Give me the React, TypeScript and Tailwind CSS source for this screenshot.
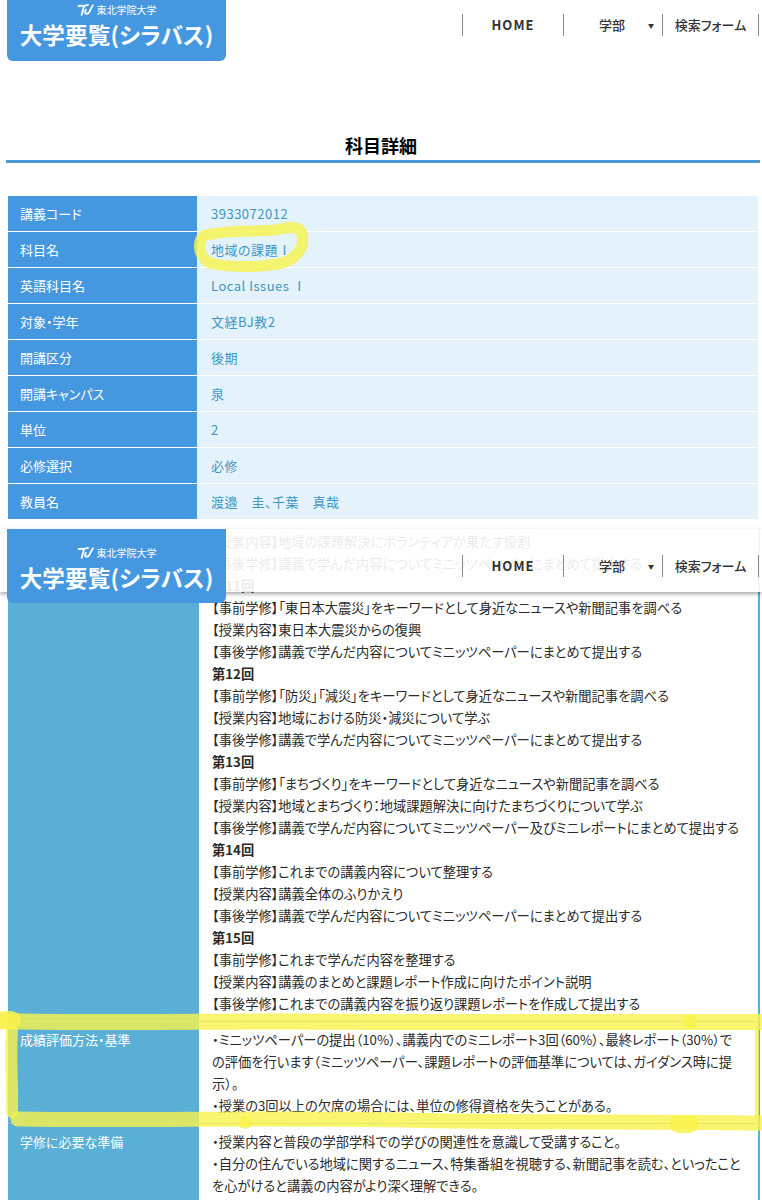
const infoRows = [
  ["講義コード", "3933072012"],
  ["科目名", "地域の課題Ⅰ"],
  ["英語科目名", "Local Issues Ⅰ"],
  ["対象・学年", "文経BJ教2"],
  ["開講区分", "後期"],
  ["開講キャンパス", "泉"],
  ["単位", "2"],
  ["必修選択", "必修"],
  ["教員名", "渡邉　圭、千葉　真哉"],
];

const scheduleLines = [
  "【授業内容】地域の課題解決にボランティアが果たす役割",
  "【事後学修】講義で学んだ内容についてミニッツペーパーにまとめて提出する",
  "第11回",
  "【事前学修】「東日本大震災」をキーワードとして身近なニュースや新聞記事を調べる",
  "【授業内容】東日本大震災からの復興",
  "【事後学修】講義で学んだ内容についてミニッツペーパーにまとめて提出する",
  "第12回",
  "【事前学修】「防災」「減災」をキーワードとして身近なニュースや新聞記事を調べる",
  "【授業内容】地域における防災・減災について学ぶ",
  "【事後学修】講義で学んだ内容についてミニッツペーパーにまとめて提出する",
  "第13回",
  "【事前学修】「まちづくり」をキーワードとして身近なニュースや新聞記事を調べる",
  "【授業内容】地域とまちづくり：地域課題解決に向けたまちづくりについて学ぶ",
  "【事後学修】講義で学んだ内容についてミニッツペーパー及びミニレポートにまとめて提出する",
  "第14回",
  "【事前学修】これまでの講義内容について整理する",
  "【授業内容】講義全体のふりかえり",
  "【事後学修】講義で学んだ内容についてミニッツペーパーにまとめて提出する",
  "第15回",
  "【事前学修】これまで学んだ内容を整理する",
  "【授業内容】講義のまとめと課題レポート作成に向けたポイント説明",
  "【事後学修】これまでの講義内容を振り返り課題レポートを作成して提出する",
];

const LogoMark = () => (
  <svg viewBox="0 0 20 16" className="h-[16px] w-[18px] text-white" fill="none" stroke="currentColor" strokeWidth="2">
    <path d="M1 4c4-2 7 1 12-2" />
    <path d="M8 3 5 14" />
    <path d="M10 7 9 10c-.6 2.500 3 3 4.500 .5L18 2" />
  </svg>
);

const Logo = ({ small }: { small?: boolean }) => (
  <div className={small ? "flex h-[61px] w-[219px] flex-col items-center justify-end rounded-b-md bg-[#4598e0] pb-[12px] text-white" : "flex h-[74px] w-[219px] flex-col items-center justify-end rounded-b-md bg-[#4598e0] pb-[11px] text-white"}>
    <div className="flex items-center gap-[2px] text-[10px] leading-[14px]">
      <LogoMark />
      <span>東北学院大学</span>
    </div>
    <div className="mt-[1px] text-[22.5px] leading-[30px] font-bold tracking-[0.2px] whitespace-nowrap">大学要覧(シラバス)</div>
  </div>
);

const Nav = ({ small }: { small?: boolean }) => (
  <div className={small ? "mt-[14px] flex h-[22px] text-[13px] font-medium text-[#333]" : "mt-[26px] flex h-[22px] text-[13px] font-medium text-[#333]"}>
    <div className="flex w-[101px] items-center justify-center border-l border-[#888] font-bold tracking-[1px]">HOME</div>
    <div className="relative flex w-[99px] items-center justify-center border-l border-[#888] pr-[2px]">
      学部
      <span className="absolute right-[8px] text-[6px]">▼</span>
    </div>
    <div className="flex w-[97px] items-center justify-center border-x border-[#888]">検索フォーム</div>
  </div>
);

const Header = ({ small }: { small?: boolean }) => (
  <div className="flex items-start justify-between pl-[7px] pr-[3px]">
    <Logo small={small} />
    <Nav small={small} />
  </div>
);

const bodyText = "flex-1 min-w-0 border-x-2 border-[#5aafd6] pl-[13px] pr-[14px] text-[13.25px] leading-[22px] text-[#2a2a2a]";

export default function App() {
  return (
    <div className="relative h-[1200px] w-[762px] overflow-hidden bg-white [font-family:'Noto_Sans_CJK_JP','Noto_Sans',sans-serif] [font-feature-settings:'palt']">
      <div className="h-[529px]">
        <Header small />
        <h1 className="mt-[70px] text-center text-[18px] leading-[28px] font-bold text-black">科目詳細</h1>
        <div className="mt-[1px] mr-[2px] ml-[6px] h-[3px] bg-[#4a98d8]" />
        <div className="mt-[33px] mr-[4px] ml-[8px] flex flex-col gap-px">
          {infoRows.map(([label, value]) => (
            <div key={label} className="flex h-[35px] text-[13px]">
              <div className="flex w-[189px] shrink-0 items-center bg-[#4598e0] pt-px pl-[12px] text-white">{label}</div>
              <div className="flex flex-1 items-center bg-[#e3f2fb] pt-px pl-[14px] tracking-[0.5px] text-[#3f96c4]">{value}</div>
            </div>
          ))}
        </div>
      </div>

      <div className="relative h-[671px]">
        <div className="mr-[2px] ml-[8px] flex h-[493px] border-b border-[#8fbcd0]">
          <div className="w-[189px] shrink-0 bg-[#5aafd6]" />
          <div className={bodyText + " pt-[2px]"}>
            {scheduleLines.map((line, i) => (
              <div key={i} className={line.startsWith("第") ? "font-bold" : "whitespace-nowrap"}>{line}</div>
            ))}
          </div>
        </div>
        <div className="mr-[2px] ml-[8px] flex h-[102px] border-b border-[#8fbcd0]">
          <div className="w-[189px] shrink-0 bg-[#5aafd6] pt-[7px] pl-[12px] text-[13px] leading-[22px] text-white">成績評価方法・基準</div>
          <div className={bodyText + " pt-[7px]"}>
            <div>・ミニッツペーパーの提出（10%）、講義内でのミニレポート3回（60%）、最終レポート（30%）での評価を行います（ミニッツペーパー、課題レポートの評価基準については、ガイダンス時に提示）。</div>
            <div>・授業の3回以上の欠席の場合には、単位の修得資格を失うことがある。</div>
          </div>
        </div>
        <div className="mr-[2px] ml-[8px] flex h-[76px]">
          <div className="w-[189px] shrink-0 bg-[#5aafd6] pt-[7px] pl-[12px] text-[13px] leading-[22px] text-white">学修に必要な準備</div>
          <div className={bodyText + " pt-[7px]"}>
            <div>・授業内容と普段の学部学科での学びの関連性を意識して受講すること。</div>
            <div>・自分の住んでいる地域に関するニュース、特集番組を視聴する、新聞記事を読む、といったことを心がけると講義の内容がより深く理解できる。</div>
          </div>
        </div>

        <div className="absolute top-0 left-0 h-[63px] w-full bg-white/90 shadow-[0_2px_4px_rgba(0,0,0,0.35)]" />
        <div className="absolute top-0 left-0 w-full">
          <Header />
        </div>
      </div>

      <svg className="pointer-events-none absolute top-0 left-0" width="762" height="1200" fill="none" stroke="#f8f34a" strokeOpacity="0.8" strokeLinecap="round" strokeLinejoin="round">
        <path d="M203 236c20-6 50-4 72-6 12-2 24-6 27 4 3 12-4 26-24 30-24 4-54 3-68-1-10-5-14-18-7-27z" strokeWidth="11" />
        <path d="M0 1021c120 3 250-1 374 1h388" strokeWidth="16" />
        <path d="M18 1119c120 2 260-2 384 1 120 3 240 1 360 3" strokeWidth="15" />
        <path d="M12 1030c-2 30 1 60 0 82" strokeWidth="12" />
        <path d="M757 1030v86" strokeWidth="4" />
        <path d="M4 1020h8" strokeWidth="18" />
        <path d="M690 1021v1" strokeWidth="14" />
        <path d="M245 1122v1" strokeWidth="12" />
        <path d="M678 1124h12" strokeWidth="18" />
      </svg>
    </div>
  );
}
